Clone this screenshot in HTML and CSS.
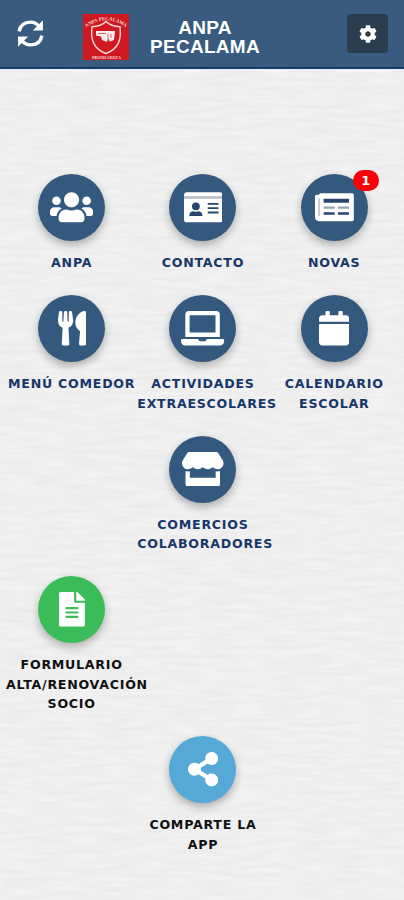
FILE: index.html
```html
<!DOCTYPE html>
<html lang="gl">
<head>
  <meta charset="UTF-8">
  <meta name="viewport" content="width=device-width, initial-scale=1.0">
  <title>ANPA Pecalama</title>
  <link rel="stylesheet" href="styles.css">
</head>
<body>
  <!-- Textura de papel -->
  <svg class="paper" width="100%" height="100%">
    <filter id="paper-noise" x="0" y="0" width="100%" height="100%" color-interpolation-filters="sRGB">
      <feTurbulence type="fractalNoise" baseFrequency="0.03 0.22" numOctaves="2" seed="4"/>
      <feColorMatrix type="matrix" values="0.055 0 0 0 0.909  0.055 0 0 0 0.909  0.055 0 0 0 0.909  0 0 0 0 1"/>
    </filter>
    <rect width="100%" height="100%" filter="url(#paper-noise)"/>
  </svg>

  <header class="topbar">
    <button class="refresh" aria-label="Actualizar">
      <svg viewBox="0 0 28 28">
        <path d="M3 12C4.200 5.500 9 3 14 3c4 0 6.500 1.800 8.500 4.500M25 16c-1.200 6.500-6 9-11 9-4 0-6.500-1.800-8.500-4.500" fill="none" stroke="#fff" stroke-width="3.300"/>
        <path d="M26 1.300v9.700h-9.700zM2 26.700v-9.700h9.700z" fill="#fff"/>
      </svg>
    </button>
    <div class="logo">
      <svg viewBox="0 0 46 46">
        <path id="arc" d="M3 13.500Q23-1 43 13.500" fill="none"/>
        <text class="logo-text"><textPath href="#arc" textLength="43" lengthAdjust="spacingAndGlyphs">ANPA PECALAMA</textPath></text>
        <path d="M23 7.500c-3.500 3.500-8 5-14 5.200C7.500 25 10 34.500 23 39.500 36 34.500 38.500 25 37 12.700c-6-.2-10.500-1.700-14-5.200z" fill="none" stroke="#f5dcdc" stroke-width="1.400"/>
        <path d="M13 17h19l-1 9-4 1.500-2-3-1 3.500-5-2-1-3.500-5-1z" fill="#fbeeee"/>
        <path d="M15 19.500h8M25 20v5M28 20v4" stroke="#cf1820" stroke-width=".7"/>
        <text class="logo-text" x="9" y="44.500" textLength="29" lengthAdjust="spacingAndGlyphs">MONDARIZA</text>
      </svg>
    </div>
    <h1>ANPA<br>PECALAMA</h1>
    <button class="settings" aria-label="Axustes">
      <svg viewBox="0 0 512 512"><path d="M487.400 315.700l-42.600-24.600c4.300-23.200 4.300-47 0-70.200l42.600-24.600c4.900-2.800 7.100-8.600 5.500-14-11.100-35.600-30-67.800-54.700-94.600-3.800-4.100-10-5.100-14.800-2.300L380.800 110c-17.900-15.400-38.500-27.300-60.800-35.100V25.800c0-5.600-3.900-10.500-9.400-11.700-36.700-8.200-74.300-7.800-109.200 0-5.500 1.200-9.400 6.100-9.400 11.700V75c-22.200 7.900-42.800 19.800-60.800 35.100L88.700 85.500c-4.900-2.800-11-1.900-14.800 2.300-24.700 26.700-43.600 58.900-54.700 94.600-1.700 5.400.6 11.200 5.500 14L67.300 221c-4.300 23.200-4.300 47 0 70.200l-42.600 24.600c-4.900 2.800-7.100 8.600-5.500 14 11.100 35.600 30 67.800 54.700 94.600 3.800 4.100 10 5.100 14.800 2.300l42.600-24.600c17.900 15.400 38.500 27.300 60.800 35.100v49.200c0 5.600 3.900 10.500 9.400 11.700 36.700 8.200 74.300 7.800 109.200 0 5.500-1.200 9.400-6.100 9.400-11.700v-49.200c22.200-7.900 42.800-19.800 60.800-35.100l42.600 24.600c4.900 2.800 11 1.900 14.800-2.300 24.700-26.700 43.600-58.900 54.700-94.600 1.500-5.500-.7-11.300-5.600-14.100zM256 336c-44.100 0-80-35.900-80-80s35.900-80 80-80 80 35.900 80 80-35.900 80-80 80z"/></svg>
    </button>
  </header>

  <main class="menu">
    <a class="item">
      <span class="circle">
        <svg viewBox="0 0 640 512"><path d="M96 224c35.300 0 64-28.700 64-64s-28.700-64-64-64-64 28.700-64 64 28.700 64 64 64zm448 0c35.300 0 64-28.700 64-64s-28.700-64-64-64-64 28.700-64 64 28.700 64 64 64zm32 32h-64c-17.600 0-33.500 7.100-45.100 18.600 40.300 22.100 68.900 62 75.100 109.400h66c17.700 0 32-14.300 32-32v-32c0-35.300-28.700-64-64-64zm-256 0c61.900 0 112-50.100 112-112S381.900 32 320 32 208 82.100 208 144s50.100 112 112 112zm76.800 32h-8.300c-20.800 10-43.900 16-68.500 16s-47.600-6-68.500-16h-8.300C179.600 288 128 339.600 128 403.200V432c0 26.500 21.500 48 48 48h288c26.500 0 48-21.500 48-48v-28.800c0-63.600-51.600-115.200-115.200-115.200zm-223.700-13.400C161.500 263.100 145.600 256 128 256H64c-35.300 0-64 28.700-64 64v32c0 17.700 14.300 32 32 32h65.900c6.300-47.400 34.900-87.300 75.200-109.400z"/></svg>
      </span>
      <span class="label">ANPA</span>
    </a>
    <a class="item">
      <span class="circle">
        <svg viewBox="0 0 576 512">
          <rect y="32" width="576" height="448" rx="44"/>
          <path class="soft" d="M0 92h576v36H0z"/>
          <g class="cut">
            <circle cx="176" cy="242" r="58"/>
            <path d="M78 384c0-48 30-68 66-68 20 10 44 10 64 0 36 0 66 20 66 68z"/>
            <path d="M352 192h160v26H352zM352 256h160v26H352zM352 320h160v28H352z"/>
          </g>
        </svg>
      </span>
      <span class="label">CONTACTO</span>
    </a>
    <a class="item">
      <span class="circle">
        <svg viewBox="0 0 576 512">
          <path d="M552 50H88c-13.300 0-24 8-28 22H24C10.700 72 0 83 0 96v310c0 31 25 56 56 56h496c13.300 0 24-10.700 24-24V74c0-13.300-10.700-24-24-24z"/>
          <path class="soft" d="M48 120h22v264H48z"/>
          <path class="cut" d="M128 130h376v58H128zM128 330h164v36H128zM340 330h164v36H340z"/>
          <path class="mid" d="M128 244h164v36H128zM340 244h164v36H340z"/>
        </svg>
        <span class="badge">1</span>
      </span>
      <span class="label">NOVAS</span>
    </a>

    <a class="item">
      <span class="circle">
        <svg viewBox="0 0 416 512"><path d="M207.900 15.200c.8 4.700 16.100 94.500 16.100 128.800 0 52.300-27.800 89.600-68.900 104.600L168 486.700c.7 13.700-10.200 25.300-24 25.300H80c-13.700 0-24.700-11.500-24-25.300l12.900-238.100C27.700 233.600 0 196.200 0 144 0 109.600 15.300 19.900 16.100 15.200 19.300-5.100 61.400-5.400 64 16.300v141.200c1.300 3.400 15.100 3.200 16 0 1.400-25.300 7.900-139.200 8-141.800 3.300-20.800 44.700-20.800 47.900 0 .2 2.700 6.600 116.500 8 141.800.9 3.200 14.800 3.400 16 0V16.300c2.600-21.600 44.800-21.400 48-1.100zm119.200 285.700l-15 185.100c-1.200 14 9.900 26 23.900 26h56c13.300 0 24-10.700 24-24V24c0-13.200-10.700-24-24-24-82.500 0-221.400 178.500-64.900 300.900z"/></svg>
      </span>
      <span class="label">MENÚ COMEDOR</span>
    </a>
    <a class="item">
      <span class="circle">
        <svg viewBox="0 0 640 512"><path d="M624 416H381.500c-.7 19.800-14.700 32-32.700 32H288c-18.700 0-33-17.500-32.800-32H16c-8.800 0-16 7.200-16 16v16c0 35.200 28.800 64 64 64h512c35.200 0 64-28.800 64-64v-16c0-8.800-7.200-16-16-16zM576 48c0-26.400-21.600-48-48-48H112C85.600 0 64 21.600 64 48v336h512V48zm-64 272H128V64h384v256z"/></svg>
      </span>
      <span class="label">ACTIVIDADES EXTRAESCOLARES</span>
    </a>
    <a class="item">
      <span class="circle">
        <svg viewBox="0 0 448 512"><path d="M12 192h424c6.600 0 12 5.400 12 12v260c0 26.500-21.500 48-48 48H48c-26.500 0-48-21.500-48-48V204c0-6.600 5.400-12 12-12zm436-44v-36c0-26.500-21.500-48-48-48h-48V12c0-6.600-5.400-12-12-12h-40c-6.600 0-12 5.400-12 12v52H160V12c0-6.600-5.400-12-12-12h-40c-6.600 0-12 5.400-12 12v52H48C21.500 64 0 85.500 0 112v36c0 6.600 5.400 12 12 12h424c6.600 0 12-5.400 12-12z"/></svg>
      </span>
      <span class="label">CALENDARIO ESCOLAR</span>
    </a>

    <a class="item center">
      <span class="circle">
        <svg viewBox="0 0 616 512"><path d="M602 118.600L537.100 15C531.300 5.700 521 0 510 0H106C95 0 84.700 5.700 78.900 15L14 118.600c-33.500 53.500-3.800 127.900 58.800 136.400 4.500.6 9.100.9 13.700.9 29.600 0 55.800-13 73.800-33.100 18 20.100 44.300 33.100 73.800 33.100 29.600 0 55.800-13 73.800-33.100 18 20.100 44.300 33.100 73.800 33.100 29.600 0 55.800-13 73.800-33.100 18.100 20.100 44.300 33.100 73.800 33.100 4.700 0 9.200-.3 13.700-.9 62.800-8.400 92.600-82.800 59-136.400zM529.500 288c-10 0-19.900-1.500-29.500-3.800V384H116v-99.800c-9.600 2.200-19.500 3.800-29.500 3.800-6 0-12.100-.4-18-1.200-5.600-.8-11.100-2.100-16.400-3.600V480c0 17.700 14.300 32 32 32h448c17.700 0 32-14.300 32-32V283.200c-5.400 1.600-10.800 2.900-16.400 3.600-6.100.8-12.100 1.200-18.200 1.200z"/></svg>
      </span>
      <span class="label">COMERCIOS COLABORADORES</span>
    </a>

    <a class="item green left">
      <span class="circle">
        <svg viewBox="0 0 384 512"><path d="M224 136V0H24C10.700 0 0 10.700 0 24v464c0 13.300 10.700 24 24 24h336c13.300 0 24-10.700 24-24V160H248c-13.200 0-24-10.800-24-24zm64 236c0 6.600-5.400 12-12 12H108c-6.600 0-12-5.400-12-12v-8c0-6.600 5.400-12 12-12h168c6.600 0 12 5.400 12 12v8zm0-64c0 6.600-5.400 12-12 12H108c-6.600 0-12-5.400-12-12v-8c0-6.600 5.400-12 12-12h168c6.600 0 12 5.400 12 12v8zm0-72v8c0 6.600-5.400 12-12 12H108c-6.600 0-12-5.400-12-12v-8c0-6.600 5.400-12 12-12h168c6.600 0 12 5.400 12 12zm96-114.100v6.100H256V0h6.100c6.400 0 12.500 2.500 17 7l97.900 98c4.500 4.500 7 10.600 7 16.900z"/></svg>
      </span>
      <span class="label">FORMULARIO ALTA/RENOVACIÓN SOCIO</span>
    </a>

    <a class="item blue share">
      <span class="circle">
        <svg viewBox="0 0 448 512"><path d="M352 320c-22.600 0-43.400 7.800-59.800 20.900l-102.500-64.100a96.600 96.600 0 0 0 0-41.600l102.500-64.100C308.600 184.200 329.400 192 352 192c53 0 96-43 96-96S405 0 352 0s-96 43-96 96c0 7.200.8 14.100 2.300 20.800l-102.500 64.100C139.400 167.800 118.600 160 96 160c-53 0-96 43-96 96s43 96 96 96c22.600 0 43.400-7.800 59.800-20.900l102.500 64.100A96.300 96.300 0 0 0 256 416c0 53 43 96 96 96s96-43 96-96-43-96-96-96z"/></svg>
      </span>
      <span class="label">COMPARTE LA APP</span>
    </a>
  </main>
</body>
</html>
```
FILE: styles.css
```css
* {
  box-sizing: border-box;
}
body {
  margin: 0;
  min-height: 900px;
  background-color: #efefef;
  font-family: Verdana, "DejaVu Sans", sans-serif;
}
.paper {
  position: absolute;
  top: 0;
  left: 0;
  z-index: -1;
}

/* Cabeceira */
.topbar {
  display: grid;
  grid-template-columns: 67px 46px 152px 1fr;
  align-items: center;
  height: 69px;
  padding: 0 16px;
  background-color: #395b80;
  border-bottom: 2px solid #123c6c;
}
.topbar button {
  border: 0;
  padding: 0;
  background: none;
}
.topbar .refresh {
  justify-self: start;
}
.refresh svg {
  display: block;
  width: 29px;
  height: 29px;
}
.logo {
  height: 46px;
  margin-top: 7px;
  background-color: #cf1820;
}
.logo svg {
  display: block;
}
.logo-text {
  fill: #f5dcdc;
  font: bold 5px "Liberation Serif", serif;
}
h1 {
  margin: 7px 0 0;
  color: #fff;
  font: bold 19px/19.500px "Liberation Sans", Arial, sans-serif;
  letter-spacing: 0.3px;
  text-align: center;
}
.topbar .settings {
  display: flex;
  justify-self: end;
  align-items: center;
  justify-content: center;
  width: 41px;
  height: 39px;
  border-radius: 3px;
  background-color: #2b3e50;
}
.settings svg {
  width: 18px;
  height: 18px;
  fill: #fff;
}

/* Menú de iconas */
.menu {
  display: grid;
  grid-template-columns: repeat(3, 131.300px);
  row-gap: 22.500px;
  padding: 105px 0 0 6px;
}
.item {
  display: flex;
  flex-direction: column;
  align-items: center;
  color: #17366a;
}
.circle {
  position: relative;
  display: flex;
  align-items: center;
  justify-content: center;
  width: 67px;
  height: 67px;
  border-radius: 50%;
  background-color: #34597f;
  box-shadow: 0 4px 9px rgba(0, 0, 0, 0.28);
}
.circle svg {
  height: 34.500px;
  fill: #fff;
}
.circle .cut {
  fill: #24466f;
}
.circle .soft {
  fill: #b9bac8;
}
.circle .mid {
  fill: #9aa3ae;
}
.label {
  width: 100%;
  margin-top: 12px;
  font-size: 12.600px;
  font-weight: bold;
  line-height: 19.500px;
  letter-spacing: 0.750px;
  text-align: center;
}
.badge {
  position: absolute;
  top: -4px;
  right: -11px;
  width: 26px;
  height: 21px;
  border-radius: 11px;
  background-color: #fb0009;
  color: #fff;
  font: bold 13px/21px "DejaVu Sans", sans-serif;
  text-align: center;
}
.left {
  grid-column: 1;
}
.center {
  grid-column: 2;
}
.share {
  grid-area: 5 / 2;
}
.green,
.blue {
  color: #111;
}
.green .circle {
  background-color: #3abd59;
}
.blue .circle {
  background-color: #56a9d6;
}
```
